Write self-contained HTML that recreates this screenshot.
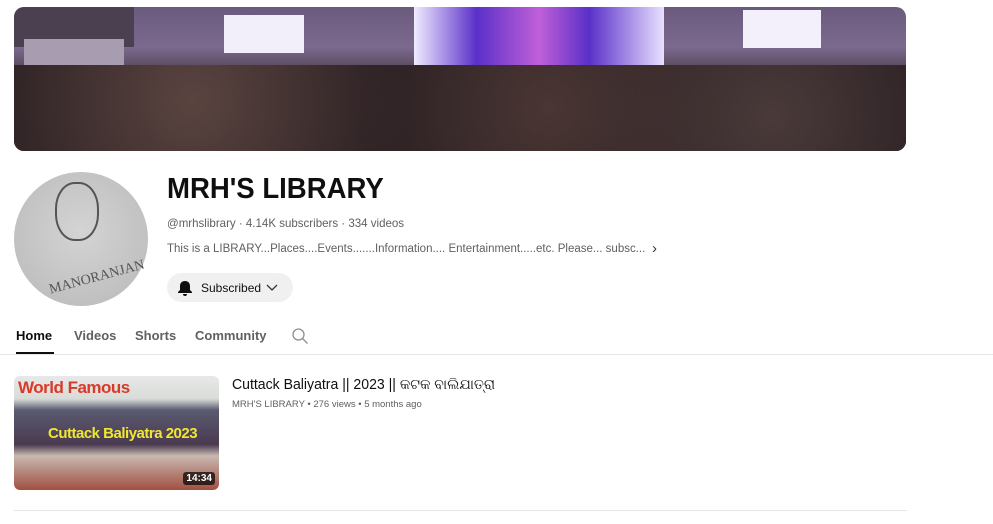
<!DOCTYPE html>
<html><head><style>
body{margin:0;width:993px;height:524px;background:#fff;font-family:"Liberation Sans",sans-serif;position:relative;overflow:hidden}
.a{position:absolute}
</style></head><body>
<div class="a" style="left:14px;top:7px;width:892px;height:144px;border-radius:10px;overflow:hidden;background:linear-gradient(180deg,#6a5a7e 0%,#7b6a8e 28%,#5a4a5e 42%,#2a2026 60%,#1c1418 100%)">
  <div class="a" style="left:0;top:0;width:120px;height:40px;background:#4a4050"></div>
  <div class="a" style="left:210px;top:8px;width:80px;height:38px;background:#f2eefa"></div>
  <div class="a" style="left:729px;top:3px;width:78px;height:38px;background:#f4f0fb"></div>
  <div class="a" style="left:400px;top:0;width:250px;height:58px;background:linear-gradient(90deg,#f0ecff,#5a30c8 25%,#c060d8 50%,#5a30c8 70%,#e8e0ff)"></div>
  <div class="a" style="left:10px;top:32px;width:100px;height:28px;background:#a89cb0"></div>
  <div class="a" style="left:0;top:58px;width:892px;height:86px;background:radial-gradient(circle at 20% 40%,#5a4440 0,transparent 30%),radial-gradient(circle at 60% 50%,#4a3634 0,transparent 35%),radial-gradient(circle at 85% 60%,#4a3a3a 0,transparent 25%),#2a1f22"></div>
</div>
<div class="a" style="left:14px;top:172px;width:134px;height:134px;border-radius:50%;background:radial-gradient(circle at 50% 45%,#d4d4d4,#b8b8b8)"></div>
<div class="a" style="left:55px;top:182px;width:40px;height:55px;border-radius:45%;border:2px solid #555"></div>
<div class="a" style="left:48px;top:270px;font-size:14px;color:#555;transform:rotate(-15deg);font-family:'Liberation Serif',serif">MANORANJAN</div>
<div class="a" style="left:167px;top:173px;font-size:29px;font-weight:bold;color:#0f0f0f;transform:scaleX(0.95);transform-origin:left">MRH'S LIBRARY</div>
<div class="a" style="left:167px;top:216px;font-size:12px;color:#606060;transform:scaleX(0.96);transform-origin:left">@mrhslibrary · 4.14K subscribers · 334 videos</div>
<div class="a" style="left:167px;top:243px;font-size:11.5px;color:#606060">This is a LIBRARY...Places....Events.......Information.... Entertainment.....etc. Please... subsc...</div>
<div class="a" style="left:652px;top:240px;font-size:15px;color:#333">&#8250;</div>
<div class="a" style="left:167px;top:273px;width:126px;height:29px;border-radius:15px;background:#f0f0f0"></div>
<svg class="a" style="left:176px;top:279px" width="18" height="18" viewBox="0 0 18 18"><path d="M9 2c-3 0-5 2-5 5v4l-2 2v1h14v-1l-2-2V7c0-3-2-5-5-5z M7 15h4a2 2 0 0 1-4 0z" fill="#0f0f0f"/></svg>
<div class="a" style="left:201px;top:281px;font-size:12px;color:#0f0f0f">Subscribed</div>
<svg class="a" style="left:266px;top:283px" width="12" height="10"><path d="M1 2l5 5 5-5" stroke="#333" fill="none" stroke-width="1.3"/></svg>
<div class="a" style="left:16px;top:328px;font-size:13px;font-weight:bold;color:#0f0f0f">Home</div>
<div class="a" style="left:16px;top:352px;width:38px;height:2px;background:#0f0f0f"></div>
<div class="a" style="left:74px;top:328px;font-size:13px;color:#606060;font-weight:bold">Videos</div>
<div class="a" style="left:135px;top:328px;font-size:13px;color:#606060;font-weight:bold">Shorts</div>
<div class="a" style="left:195px;top:328px;font-size:13px;color:#606060;font-weight:bold">Community</div>
<svg class="a" style="left:291px;top:327px" width="18" height="18"><circle cx="7.5" cy="7.5" r="5.5" stroke="#909090" fill="none" stroke-width="1.3"/><path d="M11.5 11.5l5 5" stroke="#909090" stroke-width="1.3"/></svg>
<div class="a" style="left:0;top:354px;width:993px;height:1px;background:#e5e5e5"></div>
<div class="a" style="left:14px;top:376px;width:205px;height:114px;border-radius:6px;overflow:hidden;background:linear-gradient(180deg,#e8e8e8 0%,#d8dcd8 20%,#5a5a70 30%,#4a3a50 60%,#c8b8b0 70%,#a05040 100%)">
  <div class="a" style="left:4px;top:2px;font-size:17px;font-weight:bold;color:#d83a2a;letter-spacing:-0.5px">World Famous</div>
  <div class="a" style="left:34px;top:49px;font-size:15px;font-weight:bold;color:#f0e830;letter-spacing:-0.5px">Cuttack Baliyatra 2023</div>
  <div class="a" style="right:4px;bottom:5px;background:rgba(0,0,0,.7);color:#fff;font-size:10px;font-weight:bold;padding:1px 3px;border-radius:3px">14:34</div>
</div>
<div class="a" style="left:232px;top:377px;font-size:14.5px;color:#0f0f0f;transform:scaleX(0.97);transform-origin:left">Cuttack Baliyatra || 2023 || କଟକ ବାଲିଯାତ୍ରା</div>
<div class="a" style="left:232px;top:399px;font-size:9.5px;color:#606060">MRH'S LIBRARY • 276 views • 5 months ago</div>
<div class="a" style="left:14px;top:510px;width:893px;height:1px;background:#e5e5e5"></div>
</body></html>
